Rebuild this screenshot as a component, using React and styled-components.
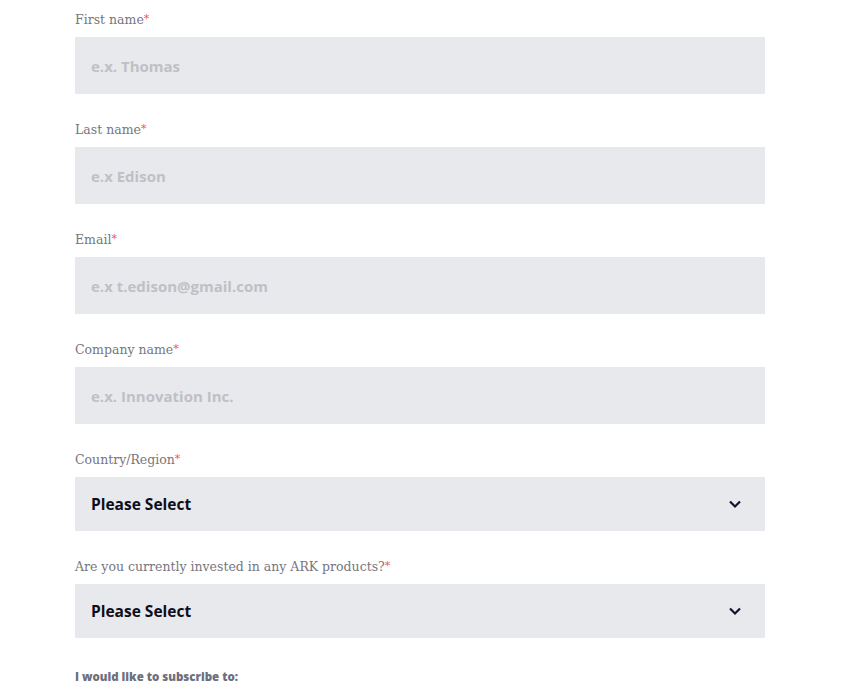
import React from 'react';
import styled, { createGlobalStyle } from 'styled-components';

const GlobalStyle = createGlobalStyle`
  body {
    margin: 0;
    background: #fff;
    font-family: "Open Sans", "Liberation Sans", sans-serif;
  }
`;

const Form = styled.form`
  width: 690px;
  padding: 9px 0 0 75px;
  display: flex;
  flex-direction: column;
`;

const Field = styled.div`
  display: flex;
  flex-direction: column;
  gap: 6px;
  margin-bottom: ${(p) => p.$spacing ?? 25}px;
`;

const Label = styled.label`
  font-family: "DejaVu Serif", "Liberation Serif", serif;
  font-size: 12.5px;
  line-height: 22px;
  color: #76767e;

  span {
    color: #f2545b;
    font-size: 11px;
    vertical-align: top;
    position: relative;
    top: -1px;
  }
`;

const Input = styled.input`
  box-sizing: border-box;
  height: 57px;
  width: 100%;
  border: none;
  background: #e8e9ed;
  padding: 0 16px;
  font-family: "Open Sans", "Liberation Sans", sans-serif;
  font-size: 15px;
  font-weight: 700;
  color: #222;
  outline: none;

  &::placeholder {
    color: #bfc0c4;
  }
`;

const SelectBox = styled.div`
  box-sizing: border-box;
  height: 54px;
  display: flex;
  align-items: center;
  justify-content: space-between;
  background: #e8e9ed;
  padding: 0 23px 0 16px;
  font-family: "Open Sans", "Liberation Sans", sans-serif;
  font-size: 15.5px;
  font-weight: 700;
  color: #0e0e1a;
`;

const Subscribe = styled.div`
  margin-top: 30px;
  font-family: "Open Sans", "Liberation Sans", sans-serif;
  font-size: 11.5px;
  font-weight: 800;
  line-height: 18px;
  color: #6e6f7c;
`;

const Chevron = () => (
  <svg width="14" height="10" viewBox="0 0 14 10">
    <path d="M2 2.5 L7 7.5 L12 2.5" fill="none" stroke="#14142b" strokeWidth="2.2" />
  </svg>
);

const fields = [
  { label: 'First name', placeholder: 'e.x. Thomas' },
  { label: 'Last name', placeholder: 'e.x Edison' },
  { label: 'Email', placeholder: 'e.x t.edison@gmail.com' },
  { label: 'Company name', placeholder: 'e.x. Innovation Inc.' },
];

const selects = ['Country/Region', 'Are you currently invested in any ARK products?'];

export default function App() {
  return (
    <>
      <GlobalStyle />
      <Form>
        {fields.map((f) => (
          <Field key={f.label}>
            <Label>
              {f.label}
              <span>*</span>
            </Label>
            <Input placeholder={f.placeholder} />
          </Field>
        ))}
        {selects.map((s, i) => (
          <Field key={s} $spacing={i === selects.length - 1 ? 0 : 25}>
            <Label>
              {s}
              <span>*</span>
            </Label>
            <SelectBox>
              Please Select
              <Chevron />
            </SelectBox>
          </Field>
        ))}
        <Subscribe>I would like to subscribe to:</Subscribe>
      </Form>
    </>
  );
}
